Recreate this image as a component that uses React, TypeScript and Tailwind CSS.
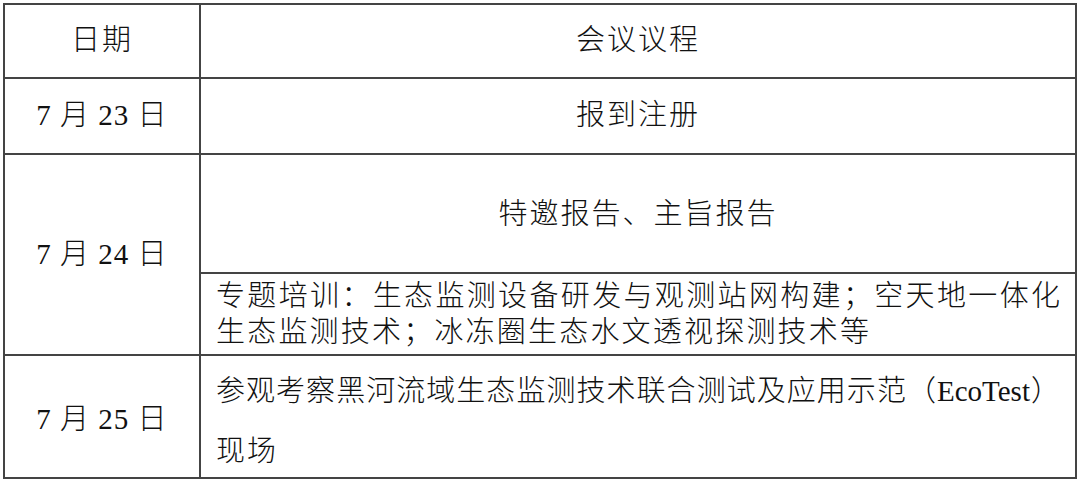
const FONT = "font-['Liberation_Serif','Noto_Sans_CJK_SC',serif]";

type Row = { date: string };

function DateCell({ date }: Row) {
  return (
    <div className="bg-white flex items-center justify-center">
      <span className="tracking-[1px]">{date}</span>
    </div>
  );
}

export default function App() {
  return (
    <div className={`w-[1080px] h-[483px] bg-white pt-[3px] pl-[3px] text-[#111] text-[29px] font-light ${FONT}`}>
      <div className="w-[1074px] h-[476px] bg-[#444] p-[2px] grid grid-cols-[194px_874px] grid-rows-[72px_74px_199px_121px] gap-[2px]">
        {/* 表头 */}
        <div className="bg-white flex items-center justify-center tracking-[2px]">日期</div>
        <div className="bg-white flex items-center justify-center tracking-[2px]">会议议程</div>

        {/* 7月23日 */}
        <DateCell date="7 月 23 日" />
        <div className="bg-white flex items-center justify-center tracking-[2px]">报到注册</div>

        {/* 7月24日 */}
        <DateCell date="7 月 24 日" />
        <div className="flex flex-col gap-[2px]">
          <div className="bg-white h-[117px] flex items-center justify-center pt-[3px] tracking-[2px]">
            特邀报告、主旨报告
          </div>
          <div className="bg-white flex-1 flex flex-col justify-center px-[15px] leading-[36px]">
            <div className="text-justify [text-align-last:justify]">
              专题培训：生态监测设备研发与观测站网构建；空天地一体化
            </div>
            <div className="tracking-[2.2px]">生态监测技术；冰冻圈生态水文透视探测技术等</div>
          </div>
        </div>

        {/* 7月25日 */}
        <div className="bg-white flex items-center justify-center pt-[6px]">
          <span className="tracking-[1px]">7 月 25 日</span>
        </div>
        <div className="bg-white flex flex-col justify-center px-[15px] pt-[8px] leading-[60px]">
          <div className="text-justify [text-align-last:justify]">
            参观考察黑河流域生态监测技术联合测试及应用示范（EcoTest）
          </div>
          <div className="tracking-[2px]">现场</div>
        </div>
      </div>
    </div>
  );
}
